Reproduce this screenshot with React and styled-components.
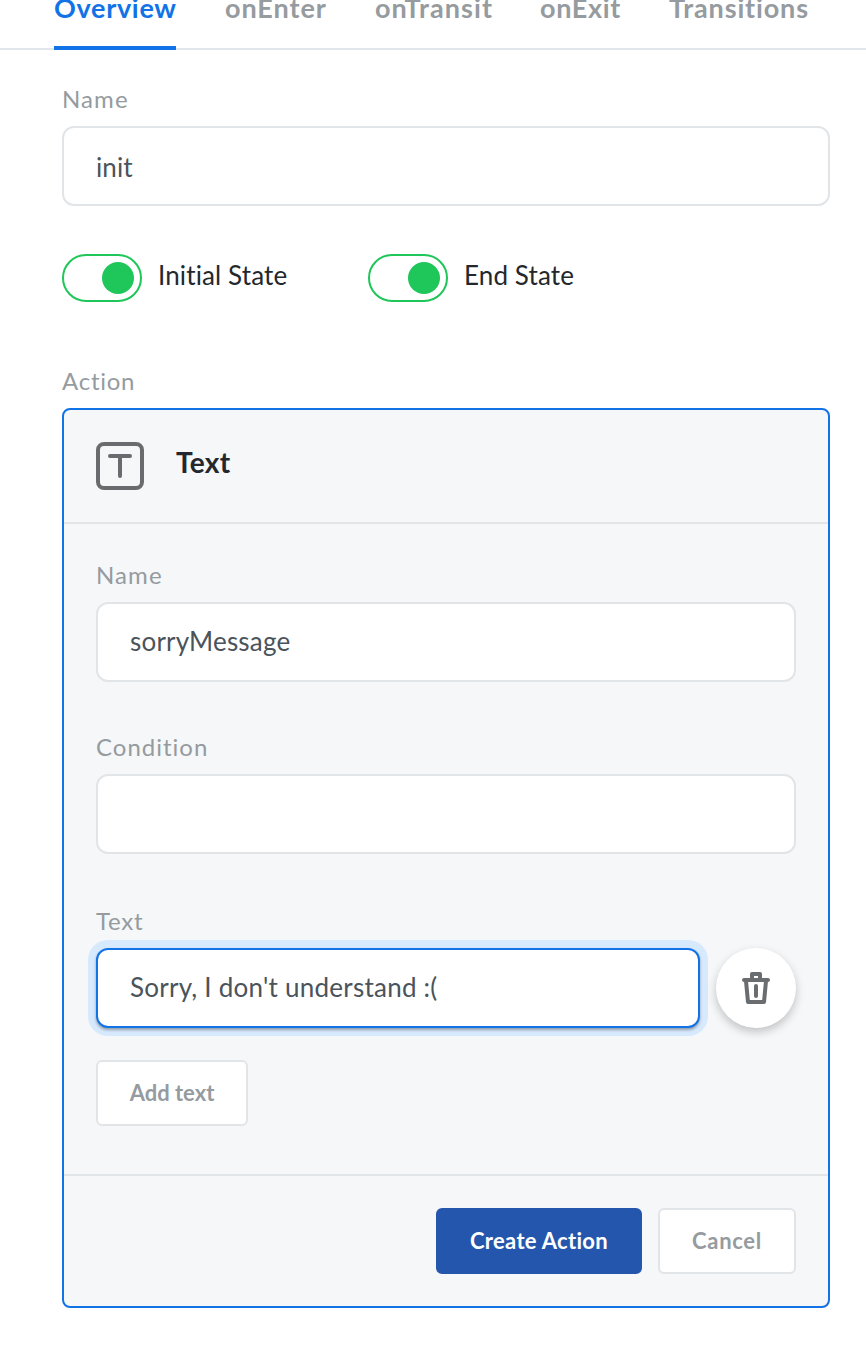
import React from "react";
import styled, { createGlobalStyle } from "styled-components";

const GlobalStyle = createGlobalStyle`
  * { box-sizing: border-box; }
  body {
    margin: 0;
    background: #fff;
    font-family: Lato, "Open Sans", sans-serif;
    font-variant-ligatures: none;
    color: #24282d;
  }
  input, button { font-family: inherit; margin: 0; }
`;

const Page = styled.div`
  height: 1348px;
  overflow: hidden;
`;

const Tabs = styled.nav`
  display: flex;
  gap: 48px;
  height: 50px;
  padding-left: 54px;
  border-bottom: 2px solid #e1e6ea;
`;

const Tab = styled.a`
  display: flex;
  flex-direction: column;
  justify-content: flex-end;
  width: ${(p) => p.$width}px;
  height: 50px;
  padding-left: ${(p) => (p.$active ? 0 : 1)}px;
  padding-bottom: ${(p) => (p.$active ? 22 : 26)}px;
  border-bottom: ${(p) => (p.$active ? "4px solid #1273e6" : "0")};
  color: ${(p) => (p.$active ? "#1273e6" : "#959b9f")};
  font-size: 27px;
  font-weight: 700;
  line-height: 32px;
  letter-spacing: ${(p) => p.$track}px;
  white-space: nowrap;
`;

const Content = styled.main`
  padding: 33px 36px 0 62px;
`;

const Label = styled.label`
  display: block;
  height: 32px;
  margin-bottom: 11px;
  color: #959b9f;
  font-size: 24px;
  line-height: 32px;
  letter-spacing: ${(p) => p.$track}px;
`;

const Input = styled.input`
  display: block;
  flex: 1;
  width: 100%;
  min-width: 0;
  height: 80px;
  padding: ${(p) => p.$drop || 0}px 32px ${(p) => p.$lift || 0}px;
  border: 2px solid ${(p) => (p.$focused ? "#1273e6" : "#e1e5e8")};
  border-radius: 12px;
  outline: none;
  background: #fff;
  color: #4b535b;
  font-size: 26px;
  letter-spacing: ${(p) => p.$track || 0}px;
  box-shadow: ${(p) =>
    p.$focused ? "0 2px 3px rgba(0, 0, 0, 0.32), 0 0 0 8px #d7e9fd" : "none"};
`;

const Switches = styled.div`
  display: grid;
  grid-template-columns: 306px 1fr;
  margin: 48px 0 63px;
`;

const SwitchRow = styled.div`
  display: flex;
  gap: 16px;
`;

const Track = styled.span`
  display: flex;
  align-items: center;
  justify-content: flex-end;
  width: 80px;
  height: 48px;
  padding: 6px;
  border: 2px solid #1fc659;
  border-radius: 24px;
`;

const Knob = styled.span`
  width: 32px;
  height: 32px;
  border-radius: 50%;
  background: #1fc659;
`;

const SwitchLabel = styled.span`
  height: 42px;
  font-size: 26px;
  line-height: 42px;
  letter-spacing: ${(p) => p.$track}px;
`;

const Card = styled.section`
  border: 2px solid #1273e6;
  border-radius: 8px;
  background: #f5f7f9;
`;

const CardHeader = styled.header`
  display: flex;
  gap: 32px;
  height: 114px;
  padding: 32px;
  border-bottom: 2px solid #e1e5e8;
`;

const CardTitle = styled.h2`
  height: 40px;
  margin: 0;
  font-size: 28px;
  font-weight: 700;
  line-height: 40px;
  letter-spacing: ${(p) => p.$track}px;
`;

const CardBody = styled.div`
  height: 650px;
  padding: 35px 32px 0;
`;

const Field = styled.div`
  margin-bottom: ${(p) => p.$gap || 0}px;
`;

const TextRow = styled.div`
  display: flex;
  gap: 16px;
`;

const DeleteButton = styled.button`
  display: flex;
  align-items: center;
  justify-content: center;
  width: 80px;
  height: 80px;
  padding: 0;
  border: 0;
  border-radius: 50%;
  background: #fff;
  color: #696d70;
  box-shadow: 0 4px 10px rgba(0, 0, 0, 0.22);
`;

const CardFooter = styled.footer`
  display: flex;
  justify-content: flex-end;
  gap: 16px;
  height: 132px;
  padding: 32px;
  border-top: 2px solid #e1e5e8;
`;

const Button = styled.button`
  width: ${(p) => p.$width}px;
  height: 66px;
  padding: 0 0 2px;
  border: 2px solid ${(p) => (p.$primary ? "#2556ae" : "#e1e5e8")};
  border-radius: 6px;
  background: ${(p) => (p.$primary ? "#2556ae" : "#fff")};
  color: ${(p) => (p.$primary ? "#fff" : "#959b9f")};
  font-size: 22px;
  font-weight: 700;
  letter-spacing: ${(p) => p.$track || 0}px;
  white-space: nowrap;
`;

const TextIcon = () => (
  <svg width="48" height="48" viewBox="0 0 48 48" fill="none" stroke="#696b6e" strokeWidth="4" strokeLinecap="round">
    <rect x="2" y="2" width="44" height="44" rx="6" />
    <path d="M14 14H34M24 14V34" />
  </svg>
);

const TrashIcon = () => (
  <svg width="28" height="32" viewBox="0 0 28 32" fill="none" stroke="currentColor" strokeWidth="4" strokeLinecap="round" strokeLinejoin="round">
    <path d="M2 8H26" />
    <path d="M10 7V2H18V7" />
    <path d="M4 9L6 30H22L24 9" />
    <path d="M14 14V24" />
  </svg>
);

const tabs = [
  { name: "Overview", width: 122, track: 0.7 },
  { name: "onEnter", width: 102, track: 0.95 },
  { name: "onTransit", width: 117, track: 1.05 },
  { name: "onExit", width: 81, track: 0.65 },
  { name: "Transitions", width: 140, track: 0.85 },
];

const Switch = ({ label, track }) => (
  <SwitchRow>
    <Track role="switch" aria-checked="true">
      <Knob />
    </Track>
    <SwitchLabel $track={track}>{label}</SwitchLabel>
  </SwitchRow>
);

export default function App() {
  return (
    <Page>
      <GlobalStyle />
      <Tabs>
        {tabs.map((t, i) => (
          <Tab key={t.name} $active={i === 0} $width={t.width} $track={t.track}>
            {t.name}
          </Tab>
        ))}
      </Tabs>
      <Content>
        <Label $track={1.1}>Name</Label>
        <Input defaultValue="init" $drop={2} $track={0.1} />
        <Switches>
          <Switch label="Initial State" track={0.12} />
          <Switch label="End State" track={0.12} />
        </Switches>
        <Label $track={0.75}>Action</Label>
        <Card>
          <CardHeader>
            <TextIcon />
            <CardTitle $track={0.3}>Text</CardTitle>
          </CardHeader>
          <CardBody>
            <Field $gap={49}>
              <Label $track={1.1}>Name</Label>
              <Input defaultValue="sorryMessage" $lift={2} $track={0.2} />
            </Field>
            <Field $gap={51}>
              <Label $track={1}>Condition</Label>
              <Input defaultValue="" />
            </Field>
            <Field $gap={32}>
              <Label $track={0.75}>Text</Label>
              <TextRow>
                <Input defaultValue="Sorry, I don't understand :(" $focused $lift={2} $track={0.24} />
                <DeleteButton aria-label="Delete text">
                  <TrashIcon />
                </DeleteButton>
              </TextRow>
            </Field>
            <Button $width={152}>Add text</Button>
          </CardBody>
          <CardFooter>
            <Button $primary $width={206} $track={0.3}>Create Action</Button>
            <Button $width={138} $track={0.7}>Cancel</Button>
          </CardFooter>
        </Card>
      </Content>
    </Page>
  );
}
